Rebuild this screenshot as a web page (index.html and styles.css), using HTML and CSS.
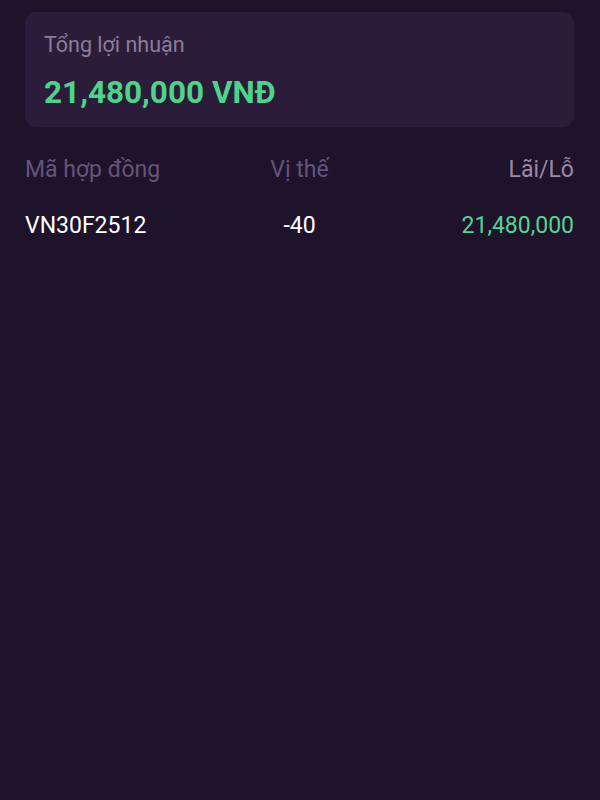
FILE: index.html
```html
<!DOCTYPE html>
<html lang="vi">
<head>
<meta charset="utf-8">
<link rel="stylesheet" href="styles.css">
</head>
<body>
<div class="page">
  <div class="card">
    <div class="card-label">Tổng lợi nhuận</div>
    <div class="card-value">21,480,000 VNĐ</div>
  </div>
  <div class="table">
    <div class="row head">
      <div class="c1">Mã hợp đồng</div>
      <div class="c2">Vị thế</div>
      <div class="c3 active">Lãi/Lỗ</div>
    </div>
    <div class="row body">
      <div class="c1">VN30F2512</div>
      <div class="c2">-40</div>
      <div class="c3 pos">21,480,000</div>
    </div>
  </div>
</div>
</body>
</html>
```
FILE: styles.css
```css
html, body {
  margin: 0;
  padding: 0;
  background: #1f122b;
  height: 100%;
}
body {
  font-family: Roboto, "Noto Sans", sans-serif;
}
.page {
  padding: 12px 26px 0 25px;
}
.card {
  background: #2b1d3a;
  border-radius: 11px;
  height: 115px;
  box-sizing: border-box;
  padding: 21px 19px 0 19px;
}
.card-label {
  font-size: 21.5px;
  line-height: 24px;
  color: #8b7c98;
}
.card-value {
  margin-top: 18px;
  font-size: 31.5px;
  line-height: 36px;
  font-weight: 700;
  color: #4fd38b;
}
.table {
  margin-top: 29px;
}
.row {
  display: grid;
  grid-template-columns: 1fr 1fr 1fr;
  align-items: center;
  font-size: 23px;
  line-height: 28px;
}
.row.head {
  color: #66547a;
}
.row.body {
  margin-top: 28px;
  color: #ffffff;
}
.c1 { text-align: left; }
.c2 { text-align: center; }
.c3 { text-align: right; }
.active { color: #9a8aa6; }
.pos { color: #55d294; }
```
